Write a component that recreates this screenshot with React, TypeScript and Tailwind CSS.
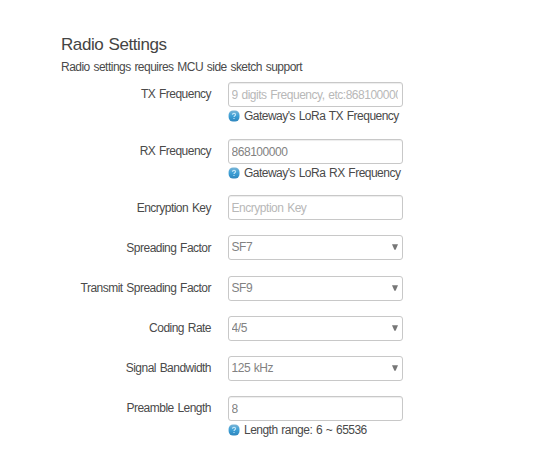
import React, { useState } from "react";

interface Field {
    id: string;
    label: string;
    value: string;
    placeholder?: string;
    hint?: string;
    options?: string[];
    rowClass: string;
}

const fields: Field[] = [
    { id: "tx", label: "TX Frequency", value: "", placeholder: "9 digits Frequency, etc:868100000", hint: "Gateway's LoRa TX Frequency", rowClass: "h-[57px] leading-[25px]" },
    { id: "rx", label: "RX Frequency", value: "868100000", hint: "Gateway's LoRa RX Frequency", rowClass: "h-14 leading-[25px]" },
    { id: "key", label: "Encryption Key", value: "", placeholder: "Encryption Key", rowClass: "h-10 leading-[27px]" },
    { id: "sf", label: "Spreading Factor", value: "SF7", options: ["SF7", "SF8", "SF9", "SF10", "SF11", "SF12"], rowClass: "h-[41px] leading-[27px]" },
    { id: "txsf", label: "Transmit Spreading Factor", value: "SF9", options: ["SF7", "SF8", "SF9", "SF10", "SF11", "SF12"], rowClass: "h-10 leading-[25px]" },
    { id: "coderate", label: "Coding Rate", value: "4/5", options: ["4/5", "4/6", "4/7", "4/8"], rowClass: "h-10 leading-[25px]" },
    { id: "bw", label: "Signal Bandwidth", value: "125 kHz", options: ["125 kHz", "250 kHz", "500 kHz"], rowClass: "h-10 leading-[25px]" },
    { id: "preamble", label: "Preamble Length", value: "8", hint: "Length range: 6 ~ 65536", rowClass: "h-14 leading-[25px]" },
];

function HelpIcon() {
    return (
        <svg width="12" height="12" viewBox="0 0 12 12" className="shrink-0">
            <defs>
                <linearGradient id="help-blue" x1="0" y1="0" x2="0" y2="1">
                    <stop offset="0" stopColor="#79b4d6" />
                    <stop offset="0.5" stopColor="#3c9fd6" />
                    <stop offset="1" stopColor="#2f86bd" />
                </linearGradient>
            </defs>
            <rect x="0.6" y="0.5" width="10.9" height="11" rx="4.4" fill="url(#help-blue)" />
            <path d="M4.4 4.7C4.5 2.9 7.6 3 7.6 4.7C7.6 5.8 6 5.7 6 7M6 8V9" fill="none" stroke="#c3e6f7" strokeWidth="1.1" />
        </svg>
    );
}

function FieldRow({ field }: { field: Field }) {
    const [value, setValue] = useState(field.value);
    const boxClass = "block h-[25px] w-[175px] appearance-none rounded-[3px] border border-[#c8c8c8] bg-white pl-[2.6px] pr-[4px] text-[12px] leading-[18px] tracking-[-0.48px] [word-spacing:0.8px] text-[#828282] outline-none";

    return (
        <div className={`flex ${field.rowClass}`}>
            <label htmlFor={field.id} className="w-[150px] shrink-0 text-right">{field.label}</label>
            <div className="ml-[17px]">
                {field.options ? (
                    <div className="relative">
                        <select id={field.id} value={value} onChange={e => setValue(e.target.value)} className={`${boxClass} pb-px`}>
                            {field.options.map((o) => (
                                <option key={o}>{o}</option>
                            ))}
                        </select>
                        <svg width="6" height="6" viewBox="0 0 6 6" className="pointer-events-none absolute right-[5px] top-[9px]">
                            <path d="M0 0.3H6L3.6 5.7H2.4Z" fill="#777777" />
                        </svg>
                    </div>
                ) : (
                    <input
                        id={field.id}
                        type="text"
                        value={value}
                        onChange={e => setValue(e.target.value)}
                        placeholder={field.placeholder}
                        className={`${boxClass} shadow-[inset_0_1px_1px_rgba(0,0,0,0.075)] placeholder:text-[#b8b8b8]`}
                    />
                )}
                {field.hint && (
                    <div className="flex h-[18px] items-center gap-1 whitespace-nowrap leading-[17px]">
                        <HelpIcon />
                        <span>{field.hint}</span>
                    </div>
                )}
            </div>
        </div>
    );
}

export default function App() {
    return (
        <div className="h-[455px] w-[554px] overflow-hidden bg-white pl-[61px] pt-[34px] font-['Liberation_Sans',Arial,sans-serif] text-[12px] tracking-[-0.52px] [word-spacing:0.9px] text-[#4a4a4a]">
            <h3 className="h-[25px] text-[17px] leading-[21px] tracking-[-0.42px] text-[#444444]">Radio Settings</h3>
            <p className="h-[23px] leading-[17px]">Radio settings requires MCU side sketch support</p>
            <form>
                {fields.map((f) => (
                    <FieldRow key={f.id} field={f} />
                ))}
            </form>
        </div>
    );
}
